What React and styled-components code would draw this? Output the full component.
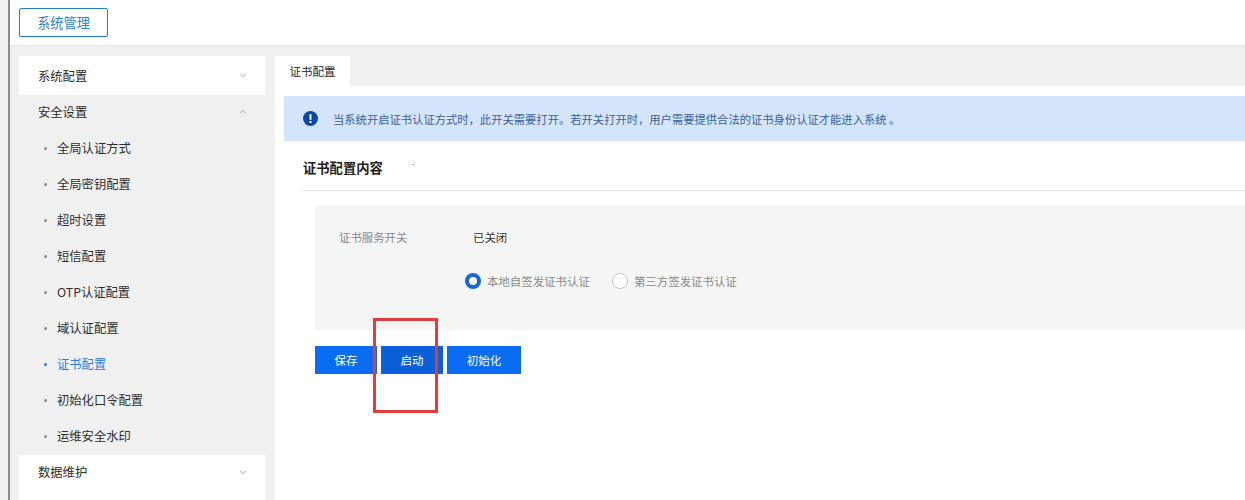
import React from "react";
import styled, { createGlobalStyle } from "styled-components";

const Global = createGlobalStyle`
  html, body { margin: 0; padding: 0; background: #fff; }
  body { font-family: "Liberation Sans", "Noto Sans CJK SC", sans-serif; overflow: hidden; }
`;
const Page = styled.div`
  display: flex; width: 1245px; height: 500px; overflow: hidden; position: relative;
`;
const Gutter = styled.div`
  width: 8px; flex: none; background: #f1f1f1; border-right: 2px solid #8c8c8c;
`;
const Shell = styled.div`
  flex: 1; min-width: 0; display: flex; flex-direction: column;
`;
const TopBar = styled.header`
  height: 46px; flex: none; padding: 8px 0 0 9px; box-sizing: border-box; background: #fff;
  border-bottom: 1px solid #e6e6e6;
`;
const TopButton = styled.button`
  width: 89px; height: 29px; box-sizing: border-box; border: 1px solid #1f7ad0; border-radius: 2px;
  background: #fff; color: #2f7fd6; font: 13.2px "Noto Sans CJK SC", sans-serif; padding: 0;
`;
const Body = styled.div`
  flex: 1; min-height: 0; display: flex; gap: 10px; padding: 10px 0 0 9px; background: #f0f0f0;
`;
const Sidebar = styled.nav`
  width: 246px; flex: none; display: flex; flex-direction: column;
`;
const GroupHead = styled.div`
  height: ${p => (p.$open ? 35 : 39)}px; flex: none; display: flex; align-items: center; justify-content: space-between;
  padding: 0 18px ${p => (p.$open ? 2 : 0)}px 19px; box-sizing: border-box; background: ${p => (p.$open ? "#f0f0f0" : "#fff")};
  font: 12.3px "Noto Sans CJK SC", sans-serif; color: #2b2b2b;
`;
const LastGroup = styled(GroupHead)`
  height: 45px; padding-bottom: 11px; margin-top: 1px;
`;
const Item = styled.div`
  height: 36px; flex: none; display: flex; align-items: center; padding-left: 25px; gap: 10px;
  font: 12.3px "Noto Sans CJK SC", sans-serif; color: ${p => (p.$active ? "#2f7fe0" : "#2f2f2f")};
`;
const Dot = styled.span`
  width: 3px; height: 3px; flex: none; border-radius: 50%; background: ${p => (p.$active ? "#2f7fe0" : "#8a8a8a")};
`;
const Main = styled.main`
  flex: 1; min-width: 0; display: flex; flex-direction: column;
`;
const TabRow = styled.div`
  height: 30px; flex: none; display: flex;
`;
const Tab = styled.div`
  width: 75px; display: flex; align-items: center; justify-content: center; background: #fff;
  font: 11.5px "Noto Sans CJK SC", sans-serif; color: #2b2b2b;
`;
const Panel = styled.div`
  flex: 1; background: #fff; padding: 10px 0 0 9px; display: flex; flex-direction: column;
`;
const Notice = styled.div`
  height: 45px; flex: none; display: flex; align-items: center; gap: 15px; padding-left: 19px;
  background: #d3e4fb; color: #3a62a0; font: 11.3px "Noto Sans CJK SC", sans-serif;
`;
const Heading = styled.div`
  margin: 0 0 0 19px; height: 50px; padding-top: 4px; flex: none; display: flex; align-items: center; box-sizing: border-box;
  border-bottom: 1px solid #e4e4e4; font: 700 13.3px "Noto Sans CJK SC", sans-serif; color: #222;
`;
const FormBox = styled.div`
  margin: 14px 0 0 31px; height: 125px; flex: none; background: #f5f5f5; display: flex; flex-direction: column;
`;
const SwitchRow = styled.div`
  height: 65px; flex: none; display: flex; align-items: center; padding: 0 0 1px 24px; box-sizing: border-box;
  font: 11.4px "Noto Sans CJK SC", sans-serif;
`;
const FieldLabel = styled.span`
  width: 134px; flex: none; color: #8a8a8a;
`;
const FieldValue = styled.span`
  color: #333;
`;
const RadioRow = styled.div`
  display: flex; align-items: center; padding: 0 0 0 150px; height: 22px;
  font: 11.45px "Noto Sans CJK SC", sans-serif; color: #8a8a8a;
`;
const Radio = styled.span`
  width: 16px; height: 16px; box-sizing: border-box; border-radius: 50%; flex: none; background: #fff;
  border: ${p => (p.$on ? "4.5px solid #1268d8" : "1px solid #c8c8c8")};
`;
const RadioLabel = styled.span`
  margin: 0 22px 0 6px;
`;
const Actions = styled.div`
  margin: 16px 0 0 31px; display: flex; gap: 4px;
`;
const Action = styled.button`
  height: 28px; width: ${p => p.$w}px; border: 0; padding: 0; border-radius: 0;
  background: ${p => (p.$dark ? "#0a60d8" : "#0a6cf0")}; color: #fff;
  font: 11.5px "Noto Sans CJK SC", sans-serif;
`;
const RedMark = styled.div`
  position: absolute; left: 373px; top: 318px; width: 65px; height: 95px; box-sizing: border-box;
  border: 3px solid #e23c3c; pointer-events: none;
`;
const StrayDot = styled.span`
  position: absolute; left: 413px; top: 164px; width: 1px; height: 1px; background: #777;
`;

const Chevron = ({ up }) => (
  <svg width="8" height="5" viewBox="0 0 8 5" fill="none" stroke="#cdcdcd" strokeWidth="1.4">
    <path d={up ? "M1 4.2l3-3 3 3" : "M1 .8l3 3 3-3"} />
  </svg>
);
const AlertIcon = () => (
  <svg width="15" height="15" viewBox="0 0 15 15">
    <circle cx="7.5" cy="7.5" r="7.5" fill="#0c47a8" />
    <rect x="6.5" y="3.2" width="2" height="5.6" fill="#fff" />
    <rect x="6.5" y="10" width="2" height="2" fill="#fff" />
  </svg>
);

const items = ["全局认证方式", "全局密钥配置", "超时设置", "短信配置", "OTP认证配置", "域认证配置", "证书配置", "初始化口令配置", "运维安全水印"];

export default function App() {
  return (
    <Page>
      <Global />
      <Gutter />
      <Shell>
        <TopBar><TopButton>系统管理</TopButton></TopBar>
        <Body>
          <Sidebar>
            <GroupHead>系统配置<Chevron /></GroupHead>
            <GroupHead $open>安全设置<Chevron up /></GroupHead>
            {items.map(t => (
              <Item key={t} $active={t === "证书配置"}><Dot $active={t === "证书配置"} />{t}</Item>
            ))}
            <LastGroup>数据维护<Chevron /></LastGroup>
          </Sidebar>
          <Main>
            <TabRow><Tab>证书配置</Tab></TabRow>
            <Panel>
              <Notice><AlertIcon />当系统开启证书认证方式时，此开关需要打开。若开关打开时，用户需要提供合法的证书身份认证才能进入系统 。</Notice>
              <Heading>证书配置内容</Heading>
              <FormBox>
                <SwitchRow><FieldLabel>证书服务开关</FieldLabel><FieldValue>已关闭</FieldValue></SwitchRow>
                <RadioRow>
                  <Radio $on /><RadioLabel>本地自签发证书认证</RadioLabel>
                  <Radio /><RadioLabel>第三方签发证书认证</RadioLabel>
                </RadioRow>
              </FormBox>
              <Actions>
                <Action $w={62}>保存</Action>
                <Action $w={62} $dark>启动</Action>
                <Action $w={74}>初始化</Action>
              </Actions>
            </Panel>
          </Main>
        </Body>
      </Shell>
      <RedMark />
      <StrayDot />
    </Page>
  );
}
